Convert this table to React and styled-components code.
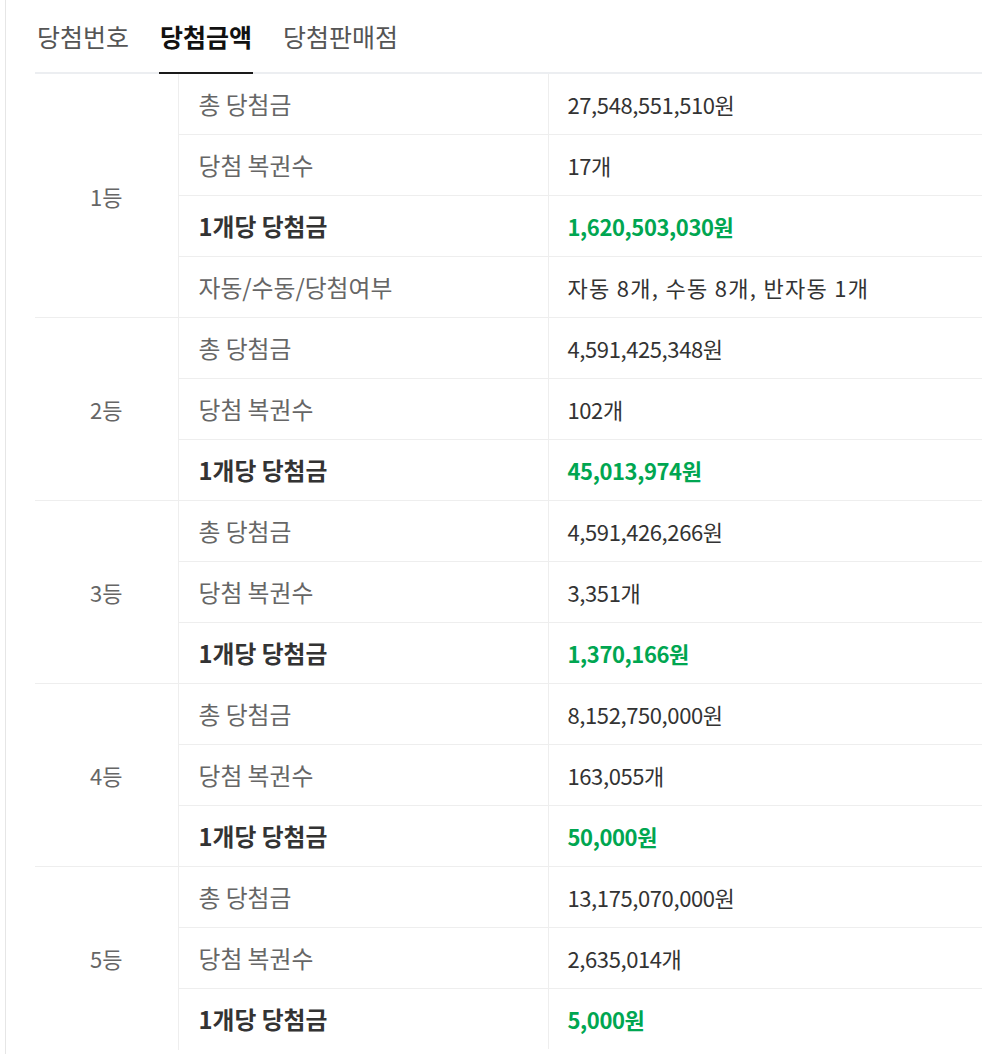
import React from 'react';
import styled, { createGlobalStyle } from 'styled-components';

const GlobalStyle = createGlobalStyle`
  body {
    margin: 0;
    background: #fff;
    font-family: 'Noto Sans CJK KR', 'Noto Sans', sans-serif;
  }
`;

const StyledPage = styled.div`
  margin-left: 5px;
  min-height: 100vh;
  padding-left: 29px;
  border-left: 1px solid #e6e6e6;
  box-sizing: border-box;
`;

const StyledTabs = styled.ul`
  display: flex;
  gap: 29px;
  margin: 0;
  padding: 0 0 0 1px;
  list-style: none;
  border-bottom: 2px solid #eceef1;
`;

const StyledTab = styled.li`
  display: flex;
  align-items: center;
  height: 74px;
  margin-bottom: -2px;
  padding: 0 1px;
  font-size: 25px;
  color: ${props => (props.active ? '#111' : '#555')};
  font-weight: ${props => (props.active ? 700 : 400)};
  border-bottom: 2px solid ${props => (props.active ? '#1a1a1a' : 'transparent')};
  box-sizing: border-box;
`;

const StyledTable = styled.table`
  width: 100%;
  border-collapse: collapse;
  table-layout: fixed;
  font-size: 22px;

  tbody tr:last-child td {
    border-bottom: none;
  }
`;

const StyledCell = styled.td`
  height: 60px;
  padding: 0 0 0 20px;
  border-bottom: 1px solid #eeeeee;
  border-right: 1px solid #eeeeee;
  line-height: 1;
  vertical-align: middle;
  color: #666;
`;

const StyledRank = styled(StyledCell)`
  padding: 0;
  text-align: center;
  color: #666;
  border-bottom-color: ${props => (props.last ? 'transparent' : '#eeeeee')};
`;

const StyledLabel = styled(StyledCell)`
  font-size: 23.8px;
  color: ${props => (props.strong ? '#333' : '#666')};
  font-weight: ${props => (props.strong ? 700 : 400)};
`;

const StyledValue = styled(StyledCell)`
  padding-left: 19px;
  border-right: none;
  color: ${props => (props.strong ? '#00a651' : '#333')};
  font-weight: ${props => (props.strong ? 700 : 400)};
  letter-spacing: ${props => (props.numeric ? '-0.4px' : '1.3px')};
`;

const tabs = ['당첨번호', '당첨금액', '당첨판매점'];

const ranks = [
  {
    rank: '1등',
    total: '27,548,551,510원',
    count: '17개',
    each: '1,620,503,030원',
    method: '자동 8개, 수동 8개, 반자동 1개'
  },
  { rank: '2등', total: '4,591,425,348원', count: '102개', each: '45,013,974원' },
  { rank: '3등', total: '4,591,426,266원', count: '3,351개', each: '1,370,166원' },
  { rank: '4등', total: '8,152,750,000원', count: '163,055개', each: '50,000원' },
  { rank: '5등', total: '13,175,070,000원', count: '2,635,014개', each: '5,000원' }
];

const RankRows = ({ item, last }) => {
  const rows = [
    { label: '총 당첨금', value: item.total },
    { label: '당첨 복권수', value: item.count },
    { label: '1개당 당첨금', value: item.each, strong: true }
  ];
  if (item.method) rows.push({ label: '자동/수동/당첨여부', value: item.method });

  return rows.map((row, i) => (
    <tr key={row.label}>
      {i === 0 && (
        <StyledRank rowSpan={rows.length} last={last}>
          {item.rank}
        </StyledRank>
      )}
      <StyledLabel strong={row.strong}>{row.label}</StyledLabel>
      <StyledValue strong={row.strong} numeric={!row.label.includes('/')}>
        {row.value}
      </StyledValue>
    </tr>
  ));
};

const App = () => (
  <>
    <GlobalStyle />
    <StyledPage>
      <StyledTabs>
        {tabs.map(tab => (
          <StyledTab key={tab} active={tab === '당첨금액'}>
            {tab}
          </StyledTab>
        ))}
      </StyledTabs>
      <StyledTable>
        <colgroup>
          <col style={{ width: 143 }} />
          <col style={{ width: 370 }} />
          <col />
        </colgroup>
        <tbody>
          {ranks.map((item, i) => (
            <RankRows key={item.rank} item={item} last={i === ranks.length - 1} />
          ))}
        </tbody>
      </StyledTable>
    </StyledPage>
  </>
);

export default App;
